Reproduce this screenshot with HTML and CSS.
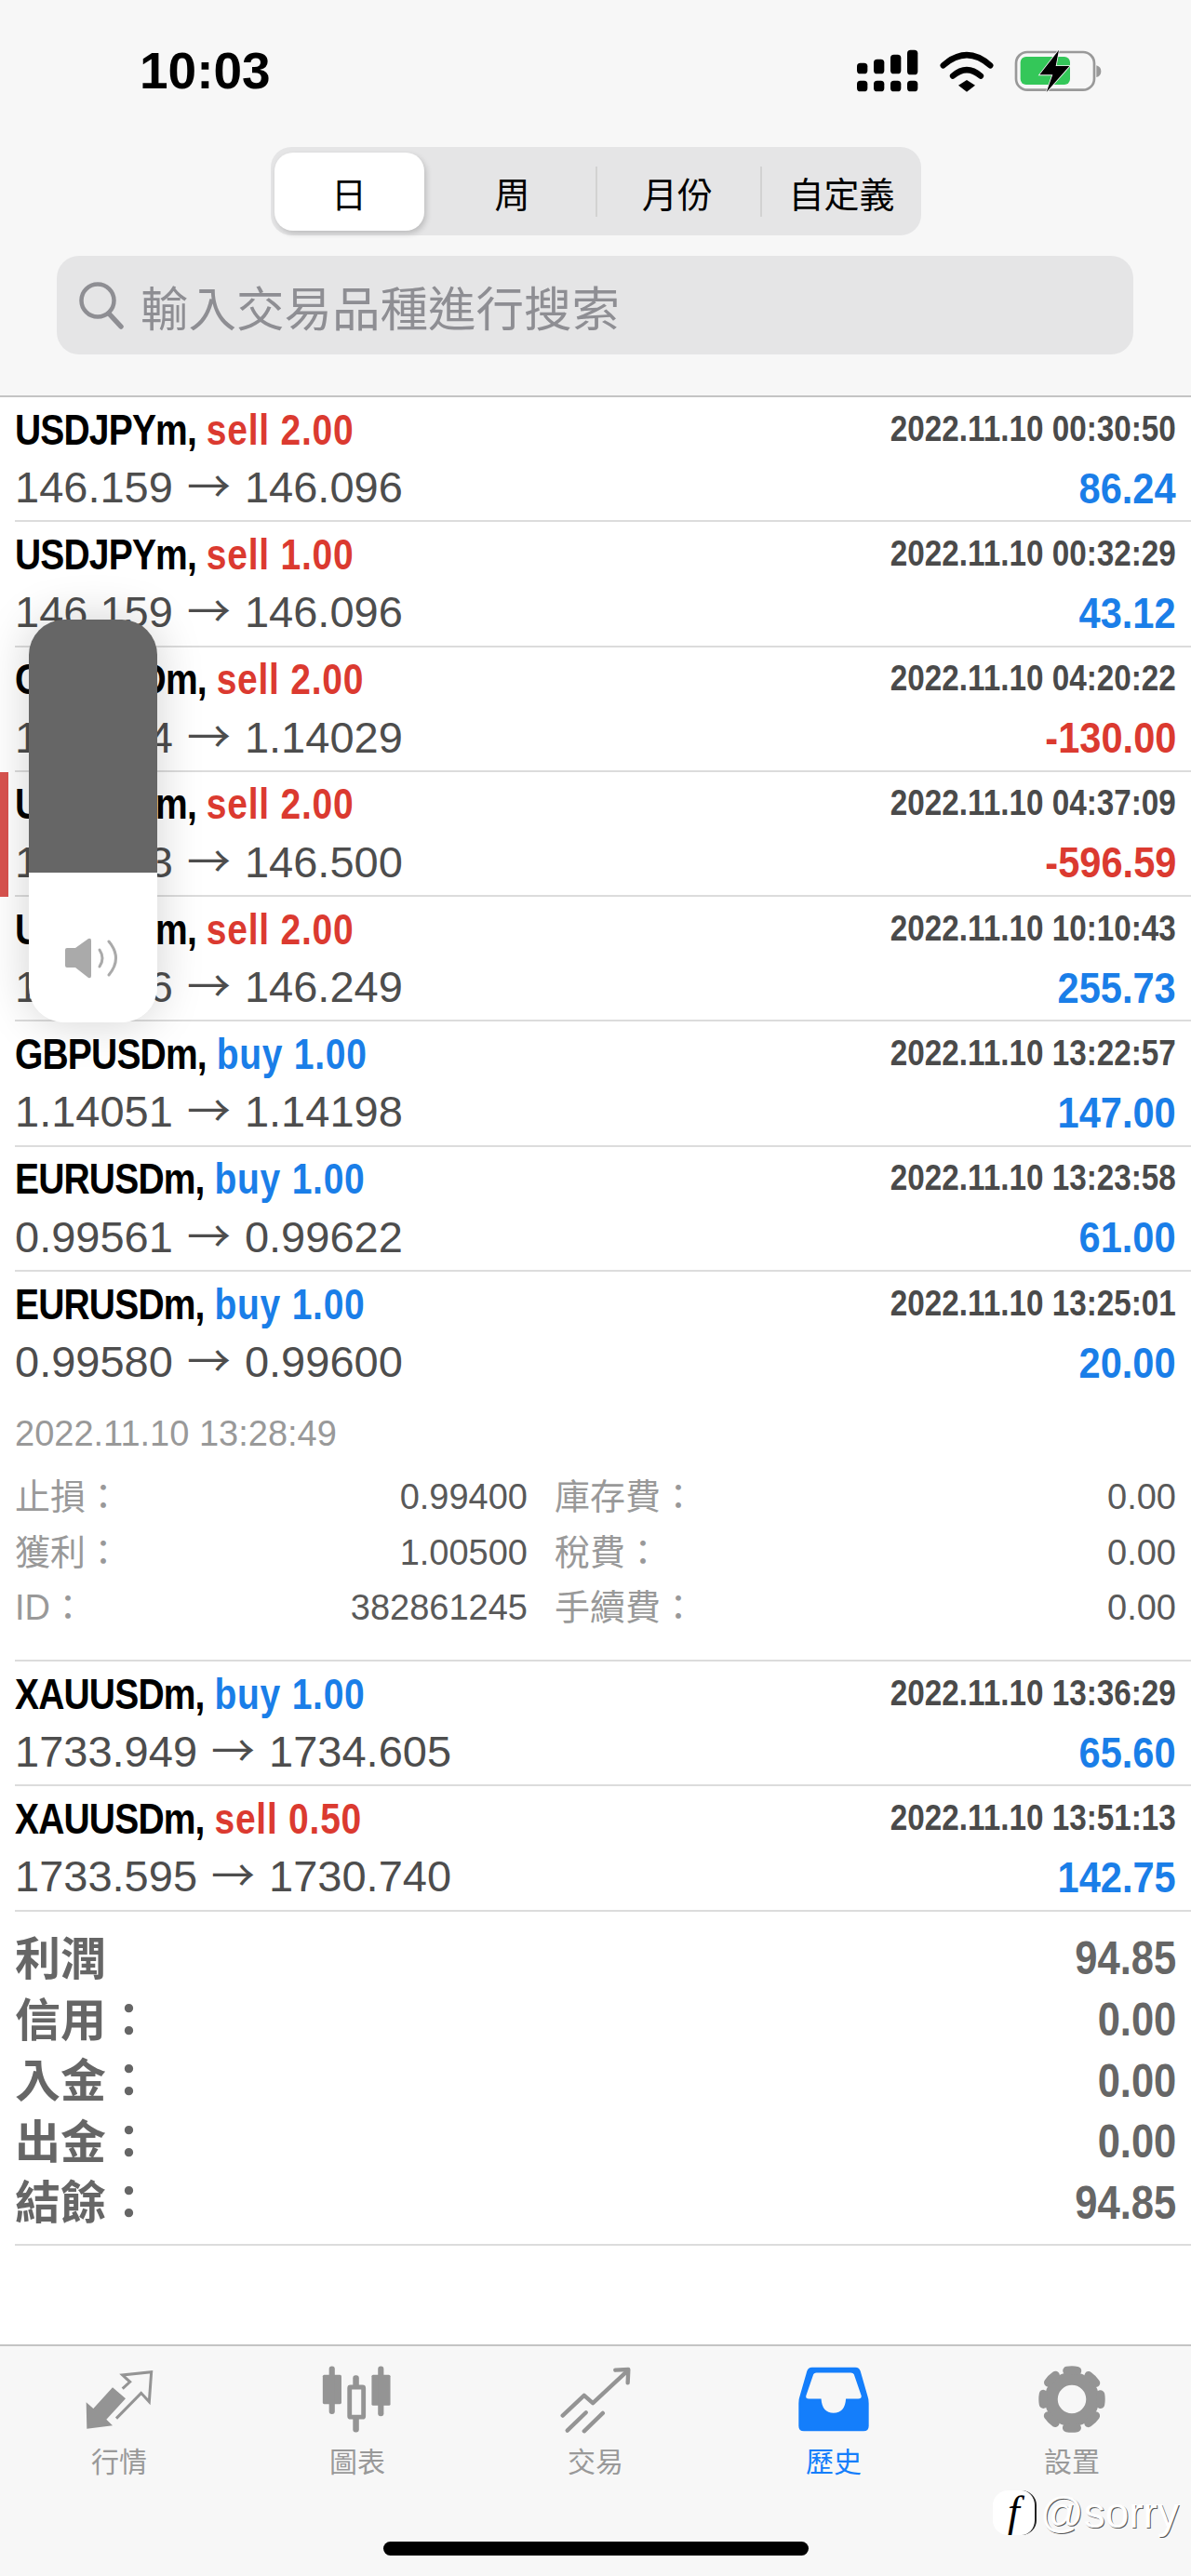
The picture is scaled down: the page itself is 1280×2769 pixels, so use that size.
FILE: index.html
```html
<!DOCTYPE html>
<html lang="zh-Hant">
<head>
  <meta charset="UTF-8">
  <meta name="viewport" content="width=device-width, initial-scale=1.0">
  <title>歷史</title>
  <link rel="stylesheet" href="styles.css">
</head>
<body>
  <div class="phone">
    <header class="top">
      <div class="status">
        <span class="clock">10:03</span>
        <div class="status-icons">
          <svg width="70" height="50" viewBox="120 90 210 150">
            <g fill="#000">
              <rect x="126" y="140" width="34" height="35" rx="11"/>
              <rect x="180" y="128" width="34" height="47" rx="11"/>
              <rect x="234" y="113" width="34" height="62" rx="11"/>
              <rect x="288" y="98" width="34" height="80" rx="11"/>
              <rect x="126" y="197" width="34" height="35" rx="11"/>
              <rect x="180" y="197" width="34" height="35" rx="11"/>
              <rect x="234" y="197" width="34" height="35" rx="11"/>
              <rect x="288" y="197" width="34" height="35" rx="11"/>
            </g>
          </svg>
          <svg width="60" height="50" viewBox="385 85 180 150">
            <g fill="none" stroke="#000" stroke-width="19" stroke-linecap="round">
              <path d="M399 143 Q475 76 551 143"/>
              <path d="M430 177 Q475 138 520 177"/>
            </g>
            <path d="M448 207 L475 190 L502 207 L475 228 Z" fill="#000"/>
          </svg>
          <svg width="96" height="50" viewBox="625 90 288 150">
            <rect x="634" y="105" width="252" height="122" rx="36" fill="none" stroke="#999" stroke-width="8"/>
            <rect x="648" y="120" width="160" height="90" rx="18" fill="#34c759"/>
            <path d="M893 148 Q908 152 908 167 Q908 182 893 186 Z" fill="#999"/>
            <path d="M772 98 L710 178 L752 178 L732 234 L806 150 L762 150 Z" fill="#000" stroke="#f7f7f7" stroke-width="5" paint-order="stroke"/>
          </svg>
        </div>
      </div>

      <div class="segments">
        <div class="seg seg-active">日</div>
        <div class="seg seg-week">周</div>
        <div class="seg seg-month">月份</div>
        <div class="seg seg-custom">自定義</div>
      </div>

      <div class="search">
        <svg width="50" height="52" viewBox="0 0 50 52">
          <circle cx="21" cy="21" r="17.5" fill="none" stroke="#8e8e93" stroke-width="4.5"/>
          <path d="M33 35 L46 49" stroke="#8e8e93" stroke-width="5.5" stroke-linecap="round"/>
        </svg>
        <span>輸入交易品種進行搜索</span>
      </div>
    </header>

    <main class="list">
      <div class="row">
        <div class="line"><span class="title"><b>USDJPYm,</b> <em class="red">sell 2.00</em></span><span class="time">2022.11.10 00:30:50</span></div>
        <div class="line"><span class="price">146.159<i>→</i>146.096</span><span class="amount blue">86.24</span></div>
      </div>
      <div class="row">
        <div class="line"><span class="title"><b>USDJPYm,</b> <em class="red">sell 1.00</em></span><span class="time">2022.11.10 00:32:29</span></div>
        <div class="line"><span class="price">146.159<i>→</i>146.096</span><span class="amount blue">43.12</span></div>
      </div>
      <div class="row">
        <div class="line"><span class="title"><b>GBPUSDm,</b> <em class="red">sell 2.00</em></span><span class="time">2022.11.10 04:20:22</span></div>
        <div class="line"><span class="price">1.13964<i>→</i>1.14029</span><span class="amount red">-130.00</span></div>
      </div>
      <div class="row">
        <div class="line"><span class="title"><b>USDJPYm,</b> <em class="red">sell 2.00</em></span><span class="time">2022.11.10 04:37:09</span></div>
        <div class="line"><span class="price">146.053<i>→</i>146.500</span><span class="amount red">-596.59</span></div>
      </div>
      <div class="row">
        <div class="line"><span class="title"><b>USDJPYm,</b> <em class="red">sell 2.00</em></span><span class="time">2022.11.10 10:10:43</span></div>
        <div class="line"><span class="price">146.616<i>→</i>146.249</span><span class="amount blue">255.73</span></div>
      </div>
      <div class="row">
        <div class="line"><span class="title"><b>GBPUSDm,</b> <em class="blue">buy 1.00</em></span><span class="time">2022.11.10 13:22:57</span></div>
        <div class="line"><span class="price">1.14051<i>→</i>1.14198</span><span class="amount blue">147.00</span></div>
      </div>
      <div class="row">
        <div class="line"><span class="title"><b>EURUSDm,</b> <em class="blue">buy 1.00</em></span><span class="time">2022.11.10 13:23:58</span></div>
        <div class="line"><span class="price">0.99561<i>→</i>0.99622</span><span class="amount blue">61.00</span></div>
      </div>

      <div class="row row-open">
        <div class="line"><span class="title"><b>EURUSDm,</b> <em class="blue">buy 1.00</em></span><span class="time">2022.11.10 13:25:01</span></div>
        <div class="line"><span class="price">0.99580<i>→</i>0.99600</span><span class="amount blue">20.00</span></div>
        <div class="open-date">2022.11.10 13:28:49</div>
        <div class="details">
          <span class="d-label">止損：</span><span class="d-value">0.99400</span>
          <span class="d-label">庫存費：</span><span class="d-value">0.00</span>
          <span class="d-label">獲利：</span><span class="d-value">1.00500</span>
          <span class="d-label">稅費：</span><span class="d-value">0.00</span>
          <span class="d-label">ID：</span><span class="d-value">382861245</span>
          <span class="d-label">手續費：</span><span class="d-value">0.00</span>
        </div>
      </div>

      <div class="row">
        <div class="line"><span class="title"><b>XAUUSDm,</b> <em class="blue">buy 1.00</em></span><span class="time">2022.11.10 13:36:29</span></div>
        <div class="line"><span class="price">1733.949<i>→</i>1734.605</span><span class="amount blue">65.60</span></div>
      </div>
      <div class="row">
        <div class="line"><span class="title"><b>XAUUSDm,</b> <em class="red">sell 0.50</em></span><span class="time">2022.11.10 13:51:13</span></div>
        <div class="line"><span class="price">1733.595<i>→</i>1730.740</span><span class="amount blue">142.75</span></div>
      </div>

      <div class="summary">
        <div class="sum-line"><span>利潤</span><b>94.85</b></div>
        <div class="sum-line"><span>信用：</span><b>0.00</b></div>
        <div class="sum-line"><span>入金：</span><b>0.00</b></div>
        <div class="sum-line"><span>出金：</span><b>0.00</b></div>
        <div class="sum-line"><span>結餘：</span><b>94.85</b></div>
      </div>
    </main>

    <footer class="tabbar">
      <div class="tabs">
        <div class="tab">
          <svg width="75" height="67" viewBox="90 40 225 200">
            <path d="M97 235 L95 150 L118 170 L180 102 L222 138 L160 205 L180 225 Z" fill="#949494"/>
            <path d="M212 106 L236 84 L212 62 L305 52 L298 148 L272 120 L192 202" fill="none" stroke="#949494" stroke-width="9"/>
          </svg>
          <span>行情</span>
        </div>
        <div class="tab">
          <svg width="78" height="76" viewBox="855 25 235 228">
            <g fill="#949494">
              <rect x="858" y="58" width="62" height="97" rx="5"/>
              <rect x="879" y="30" width="19" height="158" rx="9"/>
              <rect x="958" y="60" width="20" height="188" rx="9"/>
              <rect x="1020" y="58" width="62" height="102" rx="5"/>
              <rect x="1041" y="30" width="19" height="165" rx="9"/>
            </g>
            <rect x="947" y="99" width="46" height="99" rx="3" fill="#f7f7f7" stroke="#949494" stroke-width="15"/>
          </svg>
          <span>圖表</span>
        </div>
        <div class="tab">
          <svg width="77" height="72" viewBox="95 30 230 215">
            <g fill="none" stroke="#949494" stroke-width="13" stroke-linecap="round" stroke-linejoin="round">
              <path d="M103 190 L172 125 L200 150 L305 52"/>
              <path d="M272 44 L314 42 L312 85"/>
              <path d="M118 238 L178 180"/>
              <path d="M172 240 L232 182"/>
            </g>
          </svg>
          <span>交易</span>
        </div>
        <div class="tab tab-active">
          <svg width="78" height="72" viewBox="858 34 235 215">
            <path fill="#147efb" fill-rule="evenodd" d="M905 38 H1046 Q1058 38 1062 50 L1085 130 Q1089 140 1089 155 V228 Q1089 245 1072 245 H879 Q862 245 862 228 V155 Q862 140 866 130 L889 50 Q893 38 905 38 Z M920 56 H1030 Q1040 56 1043 66 L1065 130 Q1066 140 1055 140 H1015 Q1012 186 975 186 Q938 186 935 140 H895 Q884 140 886 130 L908 66 Q911 56 920 56 Z"/>
          </svg>
          <span>歷史</span>
        </div>
        <div class="tab">
          <svg width="80" height="76" viewBox="-120 -114 240 228">
            <circle r="68.5" fill="none" stroke="#949494" stroke-width="43"/>
            <circle r="96" fill="none" stroke="#949494" stroke-width="28" stroke-dasharray="34 41.4" stroke-dashoffset="17" stroke-linecap="round"/>
          </svg>
          <span>設置</span>
        </div>
      </div>
      <div class="home-bar"></div>

      <div class="watermark">
        <span class="wm-logo">f</span>
        <span class="wm-name">@sorry</span>
      </div>
    </footer>

    <!-- volume overlay on top of the list -->
    <div class="side-mark"></div>
    <div class="volume">
      <div class="volume-dark"></div>
      <div class="volume-light">
        <svg width="62" height="44" viewBox="0 0 62 44">
          <path d="M1 13 Q1 11 3 11 H12 L26 1 Q29 0 29 3 V41 Q29 44 26 43 L12 32 H3 Q1 32 1 30 Z" fill="#aaa"/>
          <g fill="none" stroke="#aaa" stroke-width="3" stroke-linecap="round">
            <path d="M38 13 Q44 22 38 31"/>
            <path d="M48 4 Q63 22 48 40"/>
          </g>
        </svg>
      </div>
    </div>
  </div>
</body>
</html>
```

FILE: styles.css
```css
* {
  box-sizing: border-box;
}

body {
  margin: 0;
  padding: 0;
  background-color: #fff;
  font-family: "Liberation Sans", "Noto Sans CJK TC", sans-serif;
}

.phone {
  position: relative;
  width: 1280px;
  height: 2769px;
  display: flex;
  flex-direction: column;
  overflow: hidden;
}

/* top area */
.top {
  height: 427px;
  background-color: #f7f7f7;
  border-bottom: 2px solid #c4c4c4;
}

.status {
  height: 158px;
  display: flex;
  justify-content: space-between;
  align-items: center;
  padding: 0 95px 6px 150px;
}

.clock {
  font-size: 55px;
  font-weight: 700;
  color: #000;
}

.status-icons {
  display: flex;
  align-items: center;
  gap: 20px;
}

.segments {
  width: 699px;
  height: 95px;
  margin: 0 auto;
  padding: 6px 4px 5px;
  display: flex;
  border-radius: 22px;
  background-color: #e5e5e6;
}

.seg {
  display: flex;
  align-items: center;
  justify-content: center;
  font-size: 38px;
  color: #000;
  position: relative;
}

.seg-active {
  width: 161px;
  border-radius: 20px;
  background-color: #fff;
  box-shadow: 2px 3px 6px rgba(0, 0, 0, 0.18);
}

.seg-week {
  width: 184px;
  padding-left: 6px;
}

.seg-month {
  width: 177px;
}

.seg-custom {
  width: 169px;
  padding-left: 7px;
}

.seg-month::before,
.seg-custom::before {
  content: "";
  position: absolute;
  left: 0;
  top: 15px;
  bottom: 15px;
  width: 2px;
  background-color: #d2d2d2;
}

.search {
  height: 106px;
  margin: 22px 62px 0 61px;
  padding: 0 0 0 23px;
  display: flex;
  align-items: center;
  gap: 17px;
  border-radius: 24px;
  background-color: #e5e5e6;
  color: #8e8e93;
  font-size: 51.5px;
}

/* trade list */
.list {
  flex: 1;
  background-color: #fff;
}

.row {
  height: 134.3px;
  margin-left: 16px;
  padding: 7px 16px 0 0;
  border-bottom: 2px solid #dcdcdc;
}

.row-open {
  height: 419px;
}

.line {
  height: 54px;
  display: flex;
  justify-content: space-between;
  align-items: center;
}

.line + .line {
  margin-top: 9px;
}

.title {
  display: inline-block;
  font-size: 47px;
  white-space: nowrap;
  transform: scaleX(0.83);
  transform-origin: left center;
}

.title b {
  color: #000;
  letter-spacing: -1px;
}

.title em {
  font-style: normal;
  font-weight: 700;
  letter-spacing: 0.9px;
}

.red {
  color: #db3a30;
}

.blue {
  color: #1a7ee8;
}

.time {
  display: inline-block;
  font-size: 38px;
  font-weight: 700;
  color: #4a4a4a;
  white-space: nowrap;
  transform: scaleX(0.875);
  transform-origin: right center;
}

.price {
  font-size: 47px;
  line-height: 54px;
  color: #4d4d4d;
  white-space: nowrap;
}

.price i {
  font-family: "Noto Sans CJK TC", sans-serif;
  font-style: normal;
  line-height: 0;
  margin: 0 15px;
}

.amount {
  display: inline-block;
  font-size: 47px;
  font-weight: 700;
  transform: scaleX(0.885);
  transform-origin: right center;
}

.open-date {
  margin-top: 26px;
  font-size: 38px;
  line-height: 48px;
  color: #999;
}

.details {
  margin-top: 15px;
  display: grid;
  grid-template-columns: 230px 321px 229px 468px;
  font-size: 38px;
  line-height: 59.5px;
}

.d-label {
  color: #999;
}

.d-value {
  text-align: right;
  color: #595959;
}

.d-label:nth-child(4n + 3) {
  padding-left: 29px;
}

/* totals */
.summary {
  height: 359px;
  margin-left: 16px;
  padding: 14px 16px 0 0;
  border-bottom: 2px solid #dcdcdc;
}

.sum-line {
  height: 65.6px;
  display: flex;
  justify-content: space-between;
  align-items: center;
  color: #666;
}

.sum-line span {
  font-size: 49px;
  font-weight: 700;
}

.sum-line b {
  display: inline-block;
  margin-top: 8px;
  font-size: 50px;
  transform: scaleX(0.87);
  transform-origin: right center;
}

/* bottom tabs */
.tabbar {
  position: relative;
  height: 249px;
  padding-top: 20px;
  background-color: #f7f7f7;
  border-top: 2px solid #c4c4c4;
}

.tabs {
  display: flex;
}

.tab {
  flex: 1;
  display: flex;
  flex-direction: column;
  align-items: center;
  color: #999;
  font-size: 30px;
  line-height: 36px;
}

.tab svg {
  height: 74px;
  margin-bottom: 13px;
}

.tab-active {
  color: #147efb;
}

.home-bar {
  width: 457px;
  height: 15px;
  margin: 67px auto 0;
  border-radius: 8px;
  background-color: #000;
}

.watermark {
  position: absolute;
  left: 1067px;
  top: 155px;
  display: flex;
  align-items: center;
  gap: 4px;
}

.wm-logo {
  width: 47px;
  height: 48px;
  border-radius: 16px;
  border-right: 2px solid #222;
  background-color: #fff;
  color: #000;
  font-family: "Liberation Serif", serif;
  font-style: italic;
  font-size: 46px;
  line-height: 46px;
  text-align: center;
}

.wm-name {
  font-size: 46px;
  line-height: 48px;
  color: #fff;
  text-shadow: 1px 1px 0 #555;
}

/* overlays */
.side-mark {
  position: absolute;
  left: 0;
  top: 830px;
  width: 9px;
  height: 134px;
  background-color: #d9534f;
}

.volume {
  position: absolute;
  left: 31px;
  top: 666px;
  width: 138px;
  height: 433px;
  display: flex;
  flex-direction: column;
  border-radius: 38px;
  overflow: hidden;
  box-shadow: 0 0 50px rgba(0, 0, 0, 0.18);
}

.volume-dark {
  height: 272px;
  background-color: #666;
}

.volume-light {
  flex: 1;
  padding-bottom: 47px;
  display: flex;
  align-items: flex-end;
  justify-content: center;
  background-color: #fff;
}
```
